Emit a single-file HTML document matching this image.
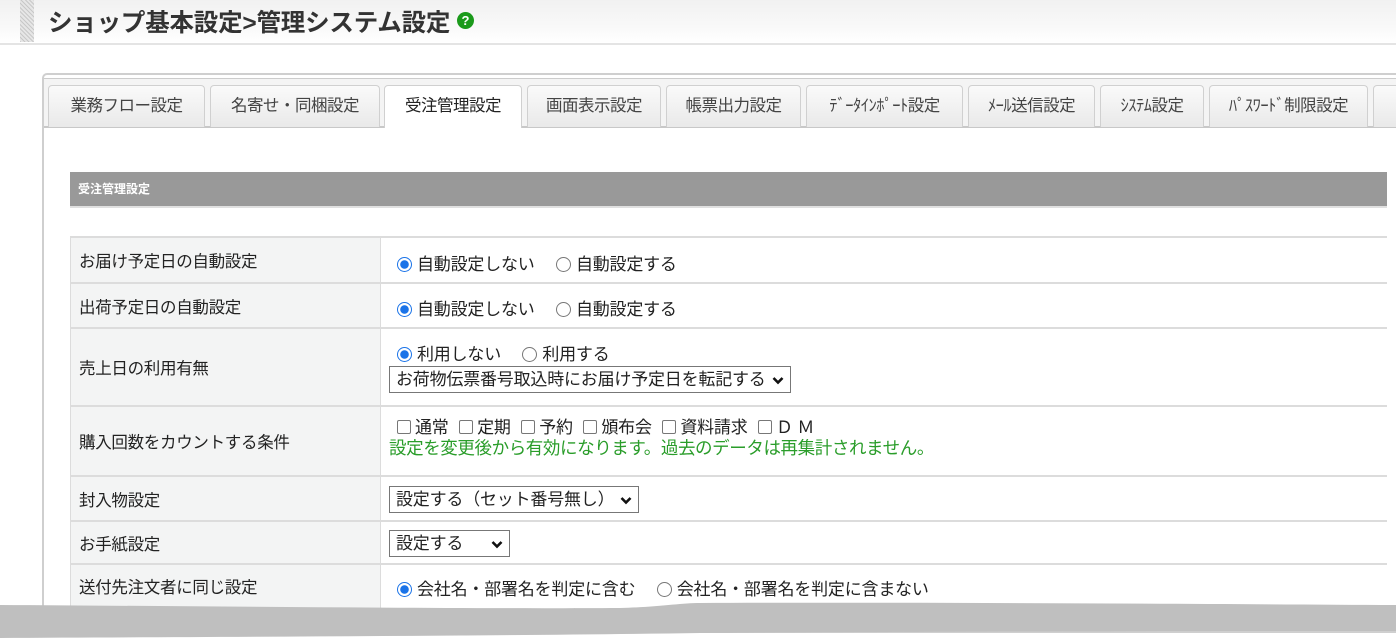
<!DOCTYPE html>
<html><head><meta charset="utf-8"><style>
*{box-sizing:border-box;margin:0;padding:0}
body{width:1396px;height:639px;position:relative;overflow:hidden;background:#fff;font-family:"Liberation Sans","Noto Sans CJK JP",sans-serif;color:#222}
.a{position:absolute}
.hdr{left:0;top:0;width:1396px;height:45px;background:linear-gradient(#f1f1f1,#fafafa 70%,#fff);border-bottom:2px solid #e4e4e4}
.hatch{left:20px;top:0;width:14px;height:42px;background:repeating-linear-gradient(45deg,#c8c8c8 0 1px,#e6e6e6 1px 3px)}
.title{left:48px;top:4px;font-size:24.5px;font-weight:bold;color:#333;letter-spacing:-0.2px;white-space:nowrap}
.q{left:457px;top:12px;width:17px;height:17px;border-radius:50%;background:#1b9a1b;color:#fff;font-size:13px;font-weight:bold;text-align:center;line-height:17px}
.panel{left:42px;top:73px;width:1400px;height:560px;border:2px solid #cfcfcf;border-radius:5px}
.tabline{left:44px;top:126px;width:1352px;height:2px;background:#c8c8c8}
.tabbar{left:44px;top:78px;width:1352px;height:48px;background:#f4f4f4;border-top:1px solid #ccc}
.tab{top:85px;height:42px;border:1px solid #d0d0d0;border-bottom:none;border-radius:4px 4px 0 0;background:linear-gradient(#fafafa,#e9e9e9);font-size:16.5px;color:#444;text-align:center;line-height:40px;white-space:nowrap;overflow:hidden;letter-spacing:-0.5px}
.tab.on{background:#fff;height:43px;color:#222}
.sec{left:70px;top:172px;width:1317px;height:36px;background:#999;color:#fff;font-size:12px;font-weight:bold;padding:8px 8px;border-bottom:2px solid #e0e0e0}
.row{left:70px;width:1317px;border-top:2px solid #dcdcdc}
.lab{position:absolute;left:0;top:0;bottom:0;width:311px;background:#f3f4f4;border-right:1px solid #dcdcdc;border-left:1px solid #dcdcdc;font-size:16.5px;padding-left:8px;display:flex;align-items:center;letter-spacing:-0.3px}
.val{position:absolute;left:319px;font-size:17px;white-space:nowrap;letter-spacing:-0.2px}
.r{display:inline-block;width:15px;height:15px;border-radius:50%;border:1px solid #777;vertical-align:-2px;margin-right:5px;background:#fff}
.r.on{border:1px solid #1a73e8;background:radial-gradient(#1a73e8 0 4px,#fff 4.5px)}
.c{display:inline-block;width:14px;height:14px;border:1px solid #777;border-radius:2px;vertical-align:-1px;margin-right:4px;margin-left:6px}
.c:first-child{margin-left:0}
.sel{display:inline-block;border:1px solid #777;height:27px;line-height:25px;padding:0 6px;font-size:17px;background:#fff}
.sel svg{margin-left:6px;vertical-align:0}
.g{color:#2a9d2a;font-size:17.5px;letter-spacing:-0.4px}
</style></head><body>
<div class="a hdr"></div>
<div class="a hatch"></div>
<div class="a title">ショップ基本設定&gt;管理システム設定</div>
<div class="a q">?</div>
<div class="a panel"></div>
<div class="a tabbar"></div>
<div class="a tabline"></div>
<div class="a tab" style="left:48px;width:157px">業務フロー設定</div>
<div class="a tab" style="left:210px;width:170px">名寄せ・同梱設定</div>
<div class="a tab on" style="left:384px;width:138px">受注管理設定</div>
<div class="a tab" style="left:527px;width:134px">画面表示設定</div>
<div class="a tab" style="left:666px;width:135px">帳票出力設定</div>
<div class="a tab" style="left:806px;width:157px">ﾃﾞｰﾀｲﾝﾎﾟｰﾄ設定</div>
<div class="a tab" style="left:968px;width:127px">ﾒｰﾙ送信設定</div>
<div class="a tab" style="left:1100px;width:104px">ｼｽﾃﾑ設定</div>
<div class="a tab" style="left:1209px;width:159px">ﾊﾟｽﾜｰﾄﾞ制限設定</div>
<div class="a tab" style="left:1373px;width:40px"></div>
<div class="a sec">受注管理設定</div>

<div class="a row" style="top:236px;height:46px"><div class="lab">お届け予定日の自動設定</div><div class="val" style="top:12px;left:327px"><span class="r on"></span>自動設定しない　 <span class="r"></span>自動設定する</div></div>
<div class="a row" style="top:282px;height:45px"><div class="lab">出荷予定日の自動設定</div><div class="val" style="top:11px;left:327px"><span class="r on"></span>自動設定しない　 <span class="r"></span>自動設定する</div></div>
<div class="a row" style="top:327px;height:78px"><div class="lab">売上日の利用有無</div><div class="val" style="top:11px;left:327px"><span class="r on"></span>利用しない　 <span class="r"></span>利用する</div><div class="val" style="top:37px"><span class="sel">お荷物伝票番号取込時にお届け予定日を転記する<svg width="12" height="9" viewBox="0 0 12 9"><path d="M1.5 2 L6 6.5 L10.5 2" stroke="#111" stroke-width="2.6" fill="none"/></svg></span></div></div>
<div class="a row" style="top:405px;height:70px"><div class="lab">購入回数をカウントする条件</div><div class="val" style="top:6px;left:327px"><span class="c"></span>通常 <span class="c"></span>定期 <span class="c"></span>予約 <span class="c"></span>頒布会 <span class="c"></span>資料請求 <span class="c"></span>Ｄ Ｍ</div><div class="val g" style="top:28px">設定を変更後から有効になります。過去のデータは再集計されません。</div></div>
<div class="a row" style="top:475px;height:45px"><div class="lab">封入物設定</div><div class="val" style="top:9px"><span class="sel">設定する（セット番号無し）<svg width="12" height="9" viewBox="0 0 12 9"><path d="M1.5 2 L6 6.5 L10.5 2" stroke="#111" stroke-width="2.6" fill="none"/></svg></span></div></div>
<div class="a row" style="top:520px;height:43px"><div class="lab">お手紙設定</div><div class="val" style="top:8px"><span class="sel">設定する　 <svg width="12" height="9" viewBox="0 0 12 9"><path d="M1.5 2 L6 6.5 L10.5 2" stroke="#111" stroke-width="2.6" fill="none"/></svg></span></div></div>
<div class="a row" style="top:563px;height:60px"><div class="lab" style="align-items:flex-start;padding-top:9px">送付先注文者に同じ設定</div><div class="val" style="top:10px;left:327px"><span class="r on"></span>会社名・部署名を判定に含む　 <span class="r"></span>会社名・部署名を判定に含まない</div></div>

<svg class="a" style="left:0;top:0" width="1396" height="639"><path d="M0 605 C200 606 450 609 620 608 C660 607 680 603 700 603 C900 602 1200 604 1396 605 L1396 631 C1100 631 850 632 700 633 C500 636 200 637 0 638 Z" fill="#bfbfbf"/></svg>
</body></html>
